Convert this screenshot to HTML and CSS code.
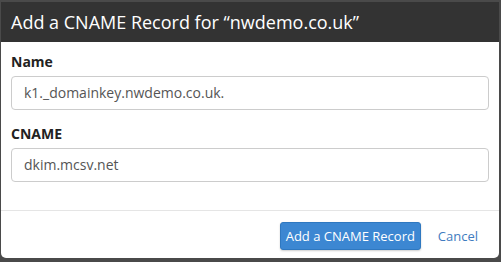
FILE: index.html
```html
<!DOCTYPE html>
<html>
<head>
<meta charset="utf-8">
<link rel="stylesheet" href="styles.css">
</head>
<body>
<div class="modal">
  <div class="modal-header">
    <h1 class="modal-title">Add a CNAME Record for “nwdemo.co.uk”</h1>
  </div>
  <div class="modal-body">
    <div class="field">
      <label class="field-label">Name</label>
      <div class="field-input">k1._domainkey.nwdemo.co.uk.</div>
    </div>
    <div class="field">
      <label class="field-label">CNAME</label>
      <div class="field-input">dkim.mcsv.net</div>
    </div>
  </div>
  <div class="modal-footer">
    <button class="btn-primary">Add a CNAME Record</button>
    <a class="btn-link">Cancel</a>
  </div>
</div>
</body>
</html>
```
FILE: styles.css
```css
html, body {
  margin: 0;
  padding: 0;
}
body {
  width: 501px;
  height: 262px;
  background: #4a4a4a;
  font-family: "Open Sans", sans-serif;
  overflow: hidden;
  padding-top: 2px;
  padding-left: 1px;
  box-sizing: border-box;
}
.modal {
  width: 498px;
  height: 256px;
  background: #fff;
  border-radius: 0 0 5px 5px;
  overflow: hidden;
  display: flex;
  flex-direction: column;
}
.modal-header {
  height: 40px;
  background: #333333;
  display: flex;
  align-items: center;
  padding: 0 10px;
}
.modal-title {
  margin: 0;
  color: #fff;
  font-size: 18px;
  font-weight: 400;
  line-height: 24px;
}
.modal-body {
  padding: 10px 10px 0 10px;
  flex: 1;
  border-bottom: 1px solid #e5e5e5;
}
.field {
  display: flex;
  flex-direction: column;
  margin-bottom: 14px;
}
.field-label {
  font-size: 14px;
  font-weight: 700;
  line-height: 20px;
  color: #222;
  margin-bottom: 4px;
}
.field-input {
  height: 34px;
  box-sizing: border-box;
  border: 1px solid #cccccc;
  border-radius: 4px;
  width: 478px;
  padding: 0 12px;
  font-size: 14px;
  line-height: 32px;
  color: #555;
}
.modal-footer {
  display: flex;
  justify-content: flex-end;
  align-items: center;
  padding: 11px 21px 8px 0;
  gap: 17px;
}
.btn-primary {
  height: 28px;
  width: 141px;
  background: #3c87d2;
  border: 1px solid #2f78c0;
  border-radius: 3px;
  color: #fff;
  font-family: "Open Sans", sans-serif;
  font-size: 13px;
  white-space: nowrap;
  padding: 0;
  box-shadow: 0 1px 2px rgba(0,0,0,0.2);
}
.btn-link {
  color: #3f7cc0;
  font-size: 13px;
}
```
